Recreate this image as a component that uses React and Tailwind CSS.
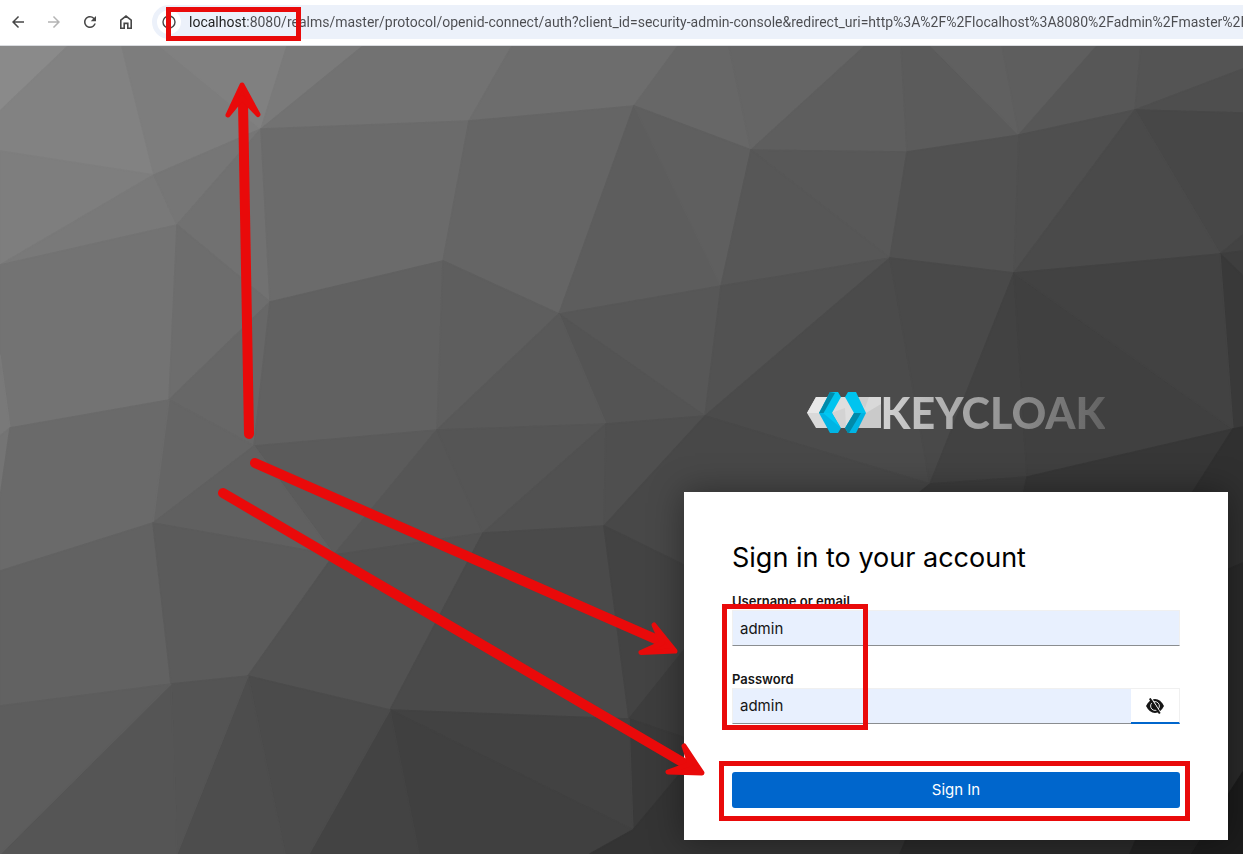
import React, { useState } from "react";
import { MdArrowBack, MdArrowForward, MdRefresh } from "react-icons/md";

const FACETS = [
  ["0,46 68,46 0,111", "#8a8a8a"],
  ["68,46 122,46 154,175 0,151 0,111", "#828282"],
  ["122,46 160,46 261,129 154,175", "#7d7d7d"],
  ["160,46 287,46 261,129", "#808080"],
  ["287,46 363,46 261,129", "#7a7a7a"],
  ["363,46 512,46 469,121 261,129", "#727272"],
  ["0,151 154,175 0,265", "#7e7e7e"],
  ["154,175 177,225 0,265", "#797979"],
  ["154,175 261,129 177,225", "#767676"],
  ["261,129 270,302 177,225", "#717171"],
  ["0,265 177,225 169,400 10,428 0,355", "#737373"],
  ["0,355 10,428 0,436", "#797979"],
  ["0,436 10,428 0,498", "#747474"],
  ["177,225 270,302 169,400", "#6d6d6d"],
  ["261,129 469,121 443,261 270,302", "#6b6b6b"],
  ["270,302 254,446 169,400", "#676767"],
  ["169,400 254,446 153,523", "#656565"],
  ["10,428 169,400 153,523 0,571 0,498", "#6a6a6a"],
  ["270,302 443,261 437,430 254,446", "#616161"],
  ["512,46 678,46 634,106 469,121", "#6d6d6d"],
  ["469,121 634,106 559,314 443,261", "#656565"],
  ["678,46 729,46 751,150 634,106", "#676767"],
  ["729,46 865,46 751,150", "#656565"],
  ["443,261 559,314 437,430", "#5e5e5e"],
  ["634,106 721,286 559,314", "#5d5d5d"],
  ["634,106 751,150 721,286", "#5f5f5f"],
  ["865,46 901,46 907,152 751,150", "#5e5e5e"],
  ["901,46 931,46 1019,135 907,152", "#5b5b5b"],
  ["931,46 1002,46 1019,135", "#606060"],
  ["1002,46 1097,46 1019,135", "#5e5e5e"],
  ["1097,46 1141,46 1135,110 1019,135", "#575757"],
  ["1141,46 1243,46 1243,69 1135,110", "#545454"],
  ["1135,110 1243,69 1243,113", "#4e4e4e"],
  ["1135,110 1243,113 1243,235 1220,254", "#474747"],
  ["751,150 907,152 890,258", "#585858"],
  ["751,150 890,258 721,286", "#575757"],
  ["907,152 1019,135 1014,273 890,258", "#515151"],
  ["1019,135 1135,110 1014,273", "#4f4f4f"],
  ["1135,110 1220,254 1014,273", "#4a4a4a"],
  ["1220,254 1243,235 1243,251", "#434343"],
  ["1220,254 1243,251 1243,276", "#3e3e3e"],
  ["1220,254 1243,276 1243,427 1233,429", "#393939"],
  ["559,314 721,286 705,416", "#575757"],
  ["721,286 890,258 705,416", "#525252"],
  ["559,314 705,416 606,424", "#545454"],
  ["559,314 606,424 437,430", "#595959"],
  ["705,416 890,258 930,484", "#4b4b4b"],
  ["890,258 1014,273 930,484", "#494949"],
  ["1014,273 1027,477 930,484", "#424242"],
  ["1014,273 1233,429 1027,477", "#404040"],
  ["1014,273 1220,254 1233,429", "#424242"],
  ["254,446 437,430 334,555", "#5b5b5b"],
  ["254,446 334,555 153,523", "#606060"],
  ["0,571 153,523 171,684 0,706", "#626262"],
  ["153,523 334,555 248,676 171,684", "#5b5b5b"],
  ["437,430 483,533 334,555", "#565656"],
  ["437,430 606,424 483,533", "#555555"],
  ["606,424 604,526 483,533", "#515151"],
  ["606,424 705,416 604,526", "#4f4f4f"],
  ["334,555 483,533 390,710 248,676", "#525252"],
  ["483,533 604,526 629,719 390,710", "#4a4a4a"],
  ["705,416 930,484 930,500 684,565 604,526", "#484848"],
  ["604,526 700,573 700,630 629,719", "#434343"],
  ["629,719 700,630 700,743", "#3d3d3d"],
  ["629,719 700,743 700,750 633,830", "#3a3a3a"],
  ["390,710 629,719 633,830", "#424242"],
  ["390,710 633,830 590,854 419,854", "#404040"],
  ["390,710 419,854 309,854", "#434343"],
  ["248,676 390,710 309,854 285,854", "#4b4b4b"],
  ["248,676 285,854 177,854", "#4d4d4d"],
  ["171,684 248,676 177,854", "#545454"],
  ["0,854 171,684 177,854", "#555555"],
  ["0,706 171,684 0,854", "#5d5d5d"],
  ["633,830 700,750 910,830 900,854 590,854", "#343434"],
  ["930,484 1027,477 1020,500 910,500", "#3d3d3d"],
  ["1027,477 1233,429 1180,512 1020,512", "#373737"],
  ["1233,429 1243,427 1243,563 1180,590 1180,512", "#303030"],
  ["1180,590 1243,563 1243,772 1190,854 1180,854", "#2a2a2a"],
  ["1243,772 1243,854 1190,854", "#1c1c1c"],
  ["900,854 910,830 1140,830 1130,854", "#2b2b2b"],
  ["1130,854 1140,830 1205,830 1190,854", "#222222"],
];

function Backdrop() {
  return (
    <svg
      className="absolute inset-0 h-full w-full"
      viewBox="0 46 1243 808"
      preserveAspectRatio="xMinYMin slice"
      aria-hidden="true"
    >
      <rect x="0" y="46" width="1243" height="808" fill="#3c3c3c" />
      {FACETS.map(([points, fill]) => (
        <polygon key={points} points={points} fill={fill} stroke={fill} strokeWidth="1.5" strokeLinejoin="round" />
      ))}
    </svg>
  );
}

function HomeIcon() {
  return (
    <svg width="12" height="14" viewBox="0 0 12 14" fill="none" stroke="currentColor" strokeWidth="1.6" aria-hidden="true">
      <path d="M.8 13.2V5.2L6 1.1l5.2 4.1v8H7.8V8.4H4.2v4.8z" />
    </svg>
  );
}

function BrowserBar() {
  return (
    <header className="flex h-[46px] shrink-0 items-start border-b border-[#dadce0] bg-white">
      <nav className="flex h-11 items-center text-[#474747]">
        <button type="button" aria-label="Back" className="flex w-9 justify-center">
          <MdArrowBack size={18} />
        </button>
        <button type="button" aria-label="Forward" className="flex w-9 justify-center text-[#b4b4b4]">
          <MdArrowForward size={18} />
        </button>
        <button type="button" aria-label="Reload" className="flex w-9 justify-center">
          <MdRefresh size={18} />
        </button>
        <button type="button" aria-label="Home" className="flex w-9 justify-center">
          <HomeIcon />
        </button>
      </nav>
      <div className="relative mt-[5px] ml-2 flex h-[34px] min-w-0 flex-1 items-center gap-2 rounded-l-full bg-[#ecf1fa] pl-[5px]">
        <button type="button" aria-label="Site information" className="flex size-6 shrink-0 items-center justify-center rounded-full bg-white text-[#474747]">
          <svg width="14" height="14" viewBox="0 0 14 14" fill="none" stroke="currentColor" strokeWidth="1.4" aria-hidden="true">
            <circle cx="7" cy="7" r="6" />
            <path d="M7 6.2v4M7 3.6v1.3" />
          </svg>
        </button>
        <input
          aria-label="Address"
          className="min-w-0 flex-1 bg-[linear-gradient(90deg,#1f1f1f_56px,#4b4c50_56px)] bg-clip-text font-['Roboto',sans-serif] text-[14px] text-transparent outline-none"
          defaultValue="localhost:8080/realms/master/protocol/openid-connect/auth?client_id=security-admin-console&redirect_uri=http%3A%2F%2Flocalhost%3A8080%2Fadmin%2Fmaster%2Fconsole%2F"
        />
        <span className="pointer-events-none absolute top-[2px] left-[14px] z-10 h-[34px] w-[135px] border-5 border-[#e90a0a]" />
      </div>
    </header>
  );
}

function Logo() {
  return (
    <div className="flex h-[44px] items-center justify-center">
      <svg width="74" height="44" viewBox="806 391 74 44" aria-hidden="true">
        <polygon points="806,413 815,397 880,397 880,428 815,428" fill="#d9d9d9" />
        <polygon points="806,413 815,397 829,397 819,413" fill="#e8e8e8" />
        <polygon points="865,413 880,404 880,428 856,428" fill="#cacaca" />
        <polygon points="856,397 868,397 864,408" fill="#cfcfcf" />
        <polygon points="830,413 839,397 845,397 853,413 845,428 839,428" fill="#dedede" />
        <polygon points="830,413 844,408 845,428 839,428" fill="#d3d3d3" />
        <polygon points="829,392 837,392 840,397 831,413 818,413" fill="#00c4ef" />
        <polygon points="829,392 834,393 822,414 818,413" fill="#008aaa" />
        <polygon points="818,413 831,413 840,428 837,433 829,433" fill="#00b4e4" />
        <polygon points="822,413 831,413 839,427" fill="#00c8f4" />
        <polygon points="847,392 855,392 865,413 853,413 844,397" fill="#00c4ef" />
        <polygon points="853,413 865,413 855,433 847,433 844,428" fill="#00b4e4" />
        <polygon points="853,413 860,413 848,433 847,433 844,428" fill="#008aaa" />
      </svg>
      <span className="bg-linear-to-r from-[#d2d2d2] to-[#636363] bg-clip-text font-['Lato',sans-serif] text-[43px] leading-[44px] font-black text-transparent">
        KEYCLOAK
      </span>
    </div>
  );
}

function EyeSlash() {
  return (
    <svg width="18" height="16" viewBox="0 0 18 16" aria-hidden="true">
      <path d="M0 8Q3.500 1 9 1T18 8Q14.500 15 9 15T0 8z" fill="#151515" />
      <circle cx="9" cy="8" r="4.400" fill="none" stroke="#fff" strokeWidth="0.9" />
      <path d="M5.300 0l10 16" stroke="#fff" strokeWidth="1.200" />
      <path d="M3.800.5l10 15" stroke="#151515" strokeWidth="2" />
    </svg>
  );
}

function SignInCard() {
  const [visible, setVisible] = useState(true);
  return (
    <section className="bg-white px-12 pt-12 pb-8 font-['Inter',sans-serif] text-[#151515] shadow-[0_0_32px_rgba(0,0,0,0.4)]">
      <h1 className="text-[27px] leading-9 font-normal text-black">Sign in to your account</h1>
      <form className="mt-4" onSubmit={(e) => e.preventDefault()}>
        <div className="relative">
          <label htmlFor="username" className="block text-[13px] leading-[18px] font-semibold">
            Username or email
          </label>
          <input
            id="username"
            defaultValue="admin"
            className="block h-9 w-full border border-[#f0f0f0] border-b-[#8a8d90] bg-[#e8f0fe] px-[7px] text-[15px] outline-none"
          />
          <label htmlFor="password" className="mt-6 block text-[13px] leading-[18px] font-semibold">
            Password
          </label>
          <div className="flex h-9">
            <input
              id="password"
              type={visible ? "text" : "password"}
              defaultValue="admin"
              className="min-w-0 flex-1 border border-r-0 border-[#f0f0f0] border-b-[#8a8d90] bg-[#e8f0fe] px-[7px] text-[15px] outline-none"
            />
            <button
              type="button"
              aria-label="Hide password"
              onClick={() => setVisible(!visible)}
              className="flex w-[49px] shrink-0 items-center justify-center border border-b-2 border-l-0 border-[#f0f0f0] border-b-[#0066cc] bg-white"
            >
              <EyeSlash />
            </button>
          </div>
          <span className="pointer-events-none absolute top-3 -bottom-[6px] -left-[10px] w-[146px] border-5 border-[#e90a0a]" />
        </div>
        <div className="relative mt-12">
          <button type="submit" className="block h-9 w-full rounded-[3px] bg-[#0066cc] text-[15px] text-white">
            Sign In
          </button>
          <span className="pointer-events-none absolute -top-[11px] -right-[10px] -bottom-[13px] -left-[13px] border-5 border-[#e90a0a]" />
        </div>
      </form>
    </section>
  );
}

function Arrows() {
  return (
    <svg
      className="pointer-events-none absolute top-0 right-0 z-10"
      width="1243"
      height="808"
      viewBox="0 46 1243 808"
      fill="#e90a0a"
      stroke="#e90a0a"
      strokeLinecap="round"
      strokeLinejoin="round"
      aria-hidden="true"
    >
      <path d="M249 434L243 102" strokeWidth="10" fill="none" />
      <path d="M242 85L228 115L242 98L258 114.500z" strokeWidth="5" />
      <path d="M255 463L660 641" strokeWidth="10" fill="none" />
      <path d="M675 651L654 625L662 643L641 652.500z" strokeWidth="5" />
      <path d="M223 493L689 766" strokeWidth="10" fill="none" />
      <path d="M702 773L684 746L690 764L668 772z" strokeWidth="5" />
    </svg>
  );
}

export default function App() {
  return (
    <div className="flex min-h-screen flex-col bg-[#3c3c3c]">
      <BrowserBar />
      <main className="relative flex flex-1 flex-col overflow-hidden">
        <Backdrop />
        <div className="relative mt-auto mr-[15px] flex w-full max-w-[544px] flex-col gap-[57px] self-end pb-[14px]">
          <Logo />
          <SignInCard />
        </div>
        <Arrows />
      </main>
    </div>
  );
}
